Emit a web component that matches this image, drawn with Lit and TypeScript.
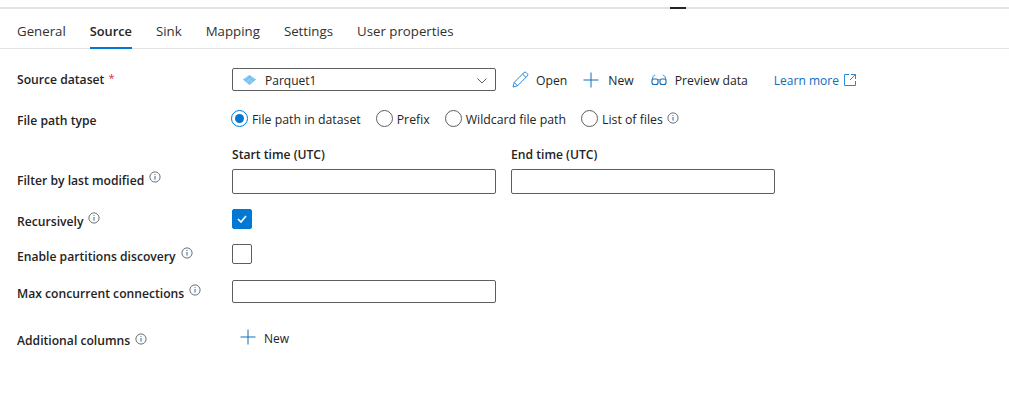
import { LitElement, html, css, svg } from "lit";
import { customElement } from "lit/decorators.js";

const TABS = ["General", "Source", "Sink", "Mapping", "Settings", "User properties"];

const info = html`<svg class="info" width="12" height="12" viewBox="0 0 12 12">
  <circle cx="6" cy="6" r="5.1" fill="none" stroke="#5f5f5f" stroke-width="0.9"></circle>
  <rect x="5.5" y="5" width="1" height="3.6" fill="#2b6ea8"></rect>
  <rect x="5.5" y="3.1" width="1" height="1" fill="#2b6ea8"></rect>
</svg>`;

const plus = html`<svg width="16" height="16" viewBox="0 0 16 16">
  <path d="M8 .5v15M.5 8h15" stroke="#0f6cbd" stroke-width="1" fill="none"></path>
</svg>`;

const pencil = html`<svg width="17" height="17" viewBox="0 0 17 17" fill="none">
  ${svg`<path d="M1 16l1.2-4.6L12 1.6a1.6 1.6 0 0 1 2.3 0l1 1a1.6 1.6 0 0 1 0 2.3L5.6 14.8z" stroke="#2b88d8" stroke-width="1"></path>
  <path d="M10.6 3l3.4 3.4M2.2 11.4l3.4 3.4" stroke="#2b88d8" stroke-width="1"></path>`}
</svg>`;

const glasses = html`<svg width="16" height="12" viewBox="0 0 16 12" fill="none">
  ${svg`<rect x="1" y="5" width="6" height="5.5" rx="2" stroke="#0f6cbd" stroke-width="1.1"></rect>
  <rect x="9" y="5" width="6" height="5.5" rx="2" stroke="#0f6cbd" stroke-width="1.1"></rect>
  <path d="M7 6c.6-.5 1.4-.5 2 0M1 6l1-3.2C2.300 1.800 3 1.300 4.200 1.300M15 6l-1-3.200C13.700 1.800 13 1.300 11.800 1.300" stroke="#2b88d8" stroke-width="1"></path>`}
</svg>`;

const external = html`<svg width="12" height="12" viewBox="0 0 12 12" fill="none">
  ${svg`<path d="M5 .5H.5v11h11V7M7 .5h4.5V5M11.500.500L6 6" stroke="#2b88d8" stroke-width="1"></path>`}
</svg>`;

const parquet = html`<svg width="13" height="10" viewBox="0 0 13 10">
  ${svg`<path d="M6.5 0L13 4.400 6.500 10 0 4.400z" fill="#6fbdf2"></path>
  <path d="M3.600 2L9.400 7.600M6.500 0l4.600 3.600M1.600 3.200l5 4.800M9.400 2L3.600 7.600M6.500 0L1.900 3.600M11.400 3.200l-5 4.800" stroke="#b5ddf8" stroke-width="0.6"></path>`}
</svg>`;

const chevron = html`<svg class="chev" width="10" height="6" viewBox="0 0 10 6" fill="none">
  <path d="M.5.5L5 5 9.500.500" stroke="#605e5c" stroke-width="1"></path>
</svg>`;

@customElement("app-root")
export class AppRoot extends LitElement {
  static styles = css`
    :host {
      display: block;
      height: 403px;
      background: #fff;
      font-family: "Open Sans", "Noto Sans", sans-serif;
      font-size: 12px;
      color: #242424;
      overflow: hidden;
    }

    .topbar {
      margin-top: 7px;
      height: 2px;
      background: #e3e3e3;
      display: flex;
    }

    .grip {
      width: 16px;
      height: 2px;
      background: #242424;
      margin-left: 670px;
    }

    .tabs {
      display: flex;
      gap: 24px;
      height: 39px;
      padding-left: 17px;
      border-bottom: 1px solid #e3e3e3;
    }

    .tab {
      font-size: 13.25px;
      line-height: 44px;
      height: 38px;
      color: #323130;
      white-space: nowrap;
    }

    .tab.active {
      font-size: 12.8px;
      font-weight: 600;
      color: #242424;
      border-bottom: 2px solid #0078d4;
    }

    .form {
      display: grid;
      grid-template-columns: 215px 1fr;
      grid-template-rows: 40px 40px 61px 35px 36px 48px 40px;
      padding: 19px 0 0 17px;
      align-items: start;
    }

    .label {
      display: flex;
      align-items: flex-start;
      gap: 5px;
      font-weight: 600;
      font-size: 12.15px;
      line-height: 18px;
      white-space: nowrap;
      padding-top: 4px;
    }

    .label.top2 { padding-top: 3px; }
    .label.top4 { padding-top: 5px; }
    .label.top23 { padding-top: 24px; }

    .info { margin-top: -1px; flex: none; }
    .label.low .info { margin-top: 1px; }

    .star {
      color: #d13438;
      font-size: 11px;
      font-weight: 400;
      line-height: 14px;
      margin-left: -1px;
    }

    .line {
      display: flex;
      align-items: center;
      height: 23px;
    }

    .select {
      box-sizing: border-box;
      width: 264px;
      height: 23px;
      border: 1px solid #605e5c;
      border-radius: 2px;
      display: flex;
      align-items: center;
      padding: 0 8px 0 10px;
      gap: 9px;
      flex: none;
    }

    .select span { flex: 1; line-height: 23px; padding-top: 1px; }

    .chev { margin-top: 3px; }

    .action {
      display: flex;
      align-items: center;
      gap: 7px;
      white-space: nowrap;
      line-height: 23px;
      font-size: 12.2px;
    }

    .action span, .learn span { padding-top: 2px; }

    .actions { display: flex; align-items: center; margin-left: 16px; }
    .actions .new { margin-left: 16px; gap: 9px; }
    .actions .preview { margin-left: 17px; gap: 8px; }

    .learn {
      margin-left: 26px;
      color: #0f6cbd;
      display: flex;
      align-items: center;
      gap: 5px;
      white-space: nowrap;
    }

    .radios {
      display: flex;
      align-items: center;
      height: 20px;
      gap: 15px;
      white-space: nowrap;
      font-size: 12.3px;
      margin-left: -1px;
    }

    .radio { display: flex; align-items: center; gap: 4px; }

    .radio span:not(.dot) { padding-top: 2px; }

    .dot {
      box-sizing: border-box;
      width: 17px;
      height: 17px;
      border: 1px solid #605e5c;
      border-radius: 50%;
      flex: none;
      display: flex;
      align-items: center;
      justify-content: center;
    }

    .dot.on { border-color: #0078d4; }
    .dot.on::after {
      content: "";
      width: 9px;
      height: 9px;
      border-radius: 50%;
      background: #0078d4;
    }

    .radio .info { margin-top: 0; }

    .times { display: flex; gap: 15px; }

    .time { display: flex; flex-direction: column; width: 264px; }

    .time label { font-weight: 600; line-height: 14px; height: 21px; font-size: 12.15px; }

    .input {
      box-sizing: border-box;
      width: 264px;
      border: 1px solid #605e5c;
      border-radius: 2px;
      background: #fff;
      padding: 0;
      display: block;
    }

    .h25 { height: 25px; }
    .h23 { height: 23px; }

    .check {
      box-sizing: border-box;
      width: 20px;
      height: 20px;
      border: 1px solid #605e5c;
      border-radius: 2px;
      display: flex;
      align-items: center;
      justify-content: center;
    }

    .check.on { background: #0078d4; border-color: #0078d4; }

    .add {
      display: flex;
      align-items: center;
      gap: 8px;
      height: 18px;
      padding-left: 8px;
    }

    .add span { padding-top: 2px; }
  `;

  private radio(text: string, on = false, extra: unknown = null) {
    return html`<div class="radio">
      <span class="dot ${on ? "on" : ""}"></span><span>${text}</span>${extra}
    </div>`;
  }

  render() {
    return html`
      <div class="topbar"><div class="grip"></div></div>
      <div class="tabs">
        ${TABS.map(t => html`<div class="tab ${t === "Source" ? "active" : ""}">${t}</div>`)}
      </div>
      <div class="form">
        <div class="label top2">Source dataset <span class="star">*</span></div>
        <div class="line">
          <div class="select">${parquet}<span>Parquet1</span>${chevron}</div>
          <div class="actions">
            <div class="action">${pencil}<span>Open</span></div>
            <div class="action new">${plus}<span>New</span></div>
            <div class="action preview">${glasses}<span>Preview data</span></div>
            <div class="learn"><span>Learn more</span> ${external}</div>
          </div>
        </div>

        <div class="label">File path type</div>
        <div class="radios">
          ${this.radio("File path in dataset", true)}
          ${this.radio("Prefix")}
          ${this.radio("Wildcard file path")}
          ${this.radio("List of files", false, info)}
        </div>

        <div class="label top23">Filter by last modified ${info}</div>
        <div class="times">
          <div class="time"><label>Start time (UTC)</label><input class="input h25" /></div>
          <div class="time"><label>End time (UTC)</label><input class="input h25" /></div>
        </div>

        <div class="label">Recursively ${info}</div>
        <div class="check on">
          <svg width="10" height="8" viewBox="0 0 10 8" fill="none">
            <path d="M1 4l3 3 5-6" stroke="#fff" stroke-width="1.7"></path>
          </svg>
        </div>

        <div class="label">Enable partitions discovery ${info}</div>
        <div class="check"></div>

        <div class="label top4">Max concurrent connections ${info}</div>
        <input class="input h23" />

        <div class="label low">Additional columns ${info}</div>
        <div class="add">${plus}<span>New</span></div>
      </div>
    `;
  }
}
